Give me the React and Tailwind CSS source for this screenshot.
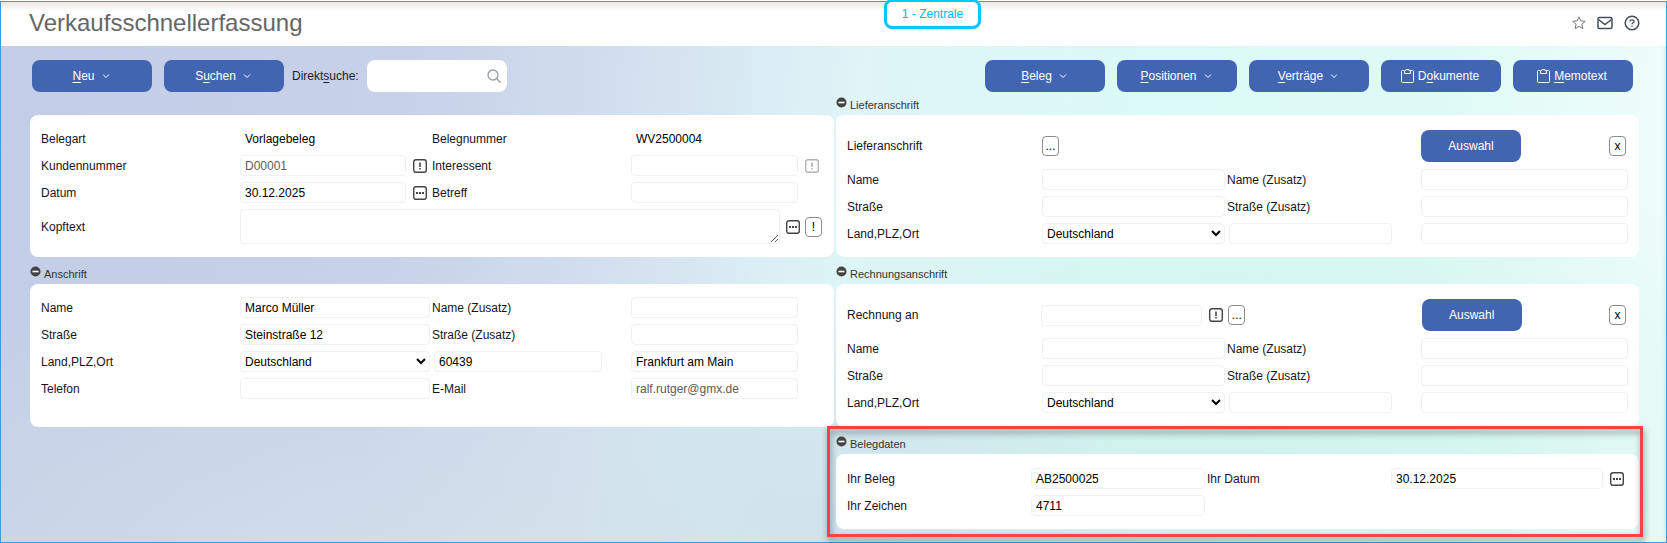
import { useId } from 'react'

const LEFT = 'grid grid-cols-[199fr_192fr_199fr_192fr]'
const RIGHT = 'grid grid-cols-[195fr_185fr_194fr_207fr]'
const DATA = 'grid grid-cols-[184fr_176fr_184fr_237fr]'

const box = 'h-[21px] min-w-0 rounded-sm border bg-white text-xs outline-none'

function Chevron() {
  return (
    <svg width="8" height="6" viewBox="0 0 8 6" fill="none" stroke="#fff" strokeWidth="1">
      <path d="M1 1.500l3 3L7 1.500" />
    </svg>
  )
}

function Clipboard() {
  return (
    <svg width="13" height="14" viewBox="0 0 13 14" fill="none" stroke="#fff" strokeWidth="1">
      <path d="M3 1.500H1.500Q.5 1.500.5 2.500V12.500Q.5 13.500 1.500 13.500H11.500Q12.500 13.500 12.500 12.500V2.500Q12.500 1.500 11.500 1.500H10" />
      <path d="M3.500 4.500V1.500H5V.5H8V1.500H9.500V4.500Z" />
    </svg>
  )
}

function ToolButton({ before = '', hot, after, doc }) {
  return (
    <button className="flex h-8 w-[120px] items-center justify-center rounded-lg bg-[#4265b1] pr-[2px] text-xs text-white">
      {doc && <span className="mr-1"><Clipboard /></span>}
      <span>{before}<u className="underline-offset-2">{hot}</u>{after}</span>
      {!doc && <span className="ml-[7px]"><Chevron /></span>}
    </button>
  )
}

function IconButton({ type, label, faded }) {
  return (
    <button aria-label={label} disabled={faded} className={`shrink-0 ${faded ? 'opacity-40' : ''}`}>
      <svg width="14" height="14" viewBox="0 0 14 14" fill="none" stroke="#444" strokeWidth="1.4">
        <rect x=".7" y=".7" width="12.6" height="12.6" rx="2.2" />
        {type === 'dots' ? (
          <path d="M3 7h2M6 7h2M9 7h2" strokeWidth="1.8" />
        ) : (
          <path d="M7 3.500v4.500M7 9v1.500" strokeWidth="1.6" />
        )}
      </svg>
    </button>
  )
}

function MiniButton({ children, label }) {
  return (
    <button
      aria-label={label}
      className="flex h-5 w-[17px] shrink-0 items-center justify-center rounded border border-[#8c8c8c] bg-white text-xs text-black"
    >
      {children}
    </button>
  )
}

function Label({ id, children }) {
  return <label htmlFor={id} className="self-center text-xs text-[#15151f]">{children}</label>
}

// label cell + field cell, children are the buttons behind the input
function Field({ label, value = '', gray, plain, pad = 'pr-[2px]', children }) {
  const id = useId()
  return (
    <>
      <Label id={id}>{label}</Label>
      <div className={`flex items-center gap-[7px] ${pad}`}>
        <input
          id={id}
          defaultValue={value}
          readOnly={plain}
          className={`${box} flex-1 pt-px pl-1 ${gray ? 'text-[#5c5c5c]' : 'text-black'} ${plain ? 'border-transparent' : 'border-[#f1f1f1]'}`}
        />
        {children}
      </div>
    </>
  )
}

function CityRow({ grid, zip = '', city = '', cityPad }) {
  const id = useId()
  return (
    <div className={`${grid} h-[27px]`}>
      <Label id={id}>Land,PLZ,Ort</Label>
      <div className="flex items-center pr-[2px]">
        <select id={id} className={`${box} w-full border-[#f1f1f1] text-black`} defaultValue="Deutschland">
          <option>Deutschland</option>
          <option>Österreich</option>
          <option>Schweiz</option>
        </select>
      </div>
      <div className="flex items-center pr-[29px] pl-[2px]">
        <input aria-label="PLZ" defaultValue={zip} className={`${box} w-full border-[#f1f1f1] pt-px pl-1 text-black`} />
      </div>
      <div className={`flex items-center ${cityPad}`}>
        <input aria-label="Ort" defaultValue={city} className={`${box} w-full border-[#f1f1f1] pt-px pl-1 text-black`} />
      </div>
    </div>
  )
}

function Section({ title, first, pad = 'pt-[11px]', children }) {
  return (
    <section className="flex flex-col">
      <div className={first ? 'h-[23px]' : 'h-[27px]'}>
        {title && (
          <button className={`flex items-start gap-[3px] text-[11px] leading-4 text-[#333] ${first ? 'pt-[5px]' : 'pt-[9px]'}`}>
            <svg width="11" height="11" viewBox="0 0 11 11">
              <circle cx="5.500" cy="5.500" r="5" fill="#444" />
              <rect x="2.500" y="4.700" width="6" height="1.600" fill="#fff" />
            </svg>
            {title}
          </button>
        )}
      </div>
      <div className={`flex-1 rounded-lg bg-white px-[11px] pb-[10px] ${pad}`}>{children}</div>
    </section>
  )
}

function AddressRows({ grid, name, street, pad }) {
  return (
    <>
      <div className={`${grid} h-[27px]`}>
        <Field label="Name" value={name} />
        <Field label="Name (Zusatz)" pad={pad} />
      </div>
      <div className={`${grid} h-[27px]`}>
        <Field label="Straße" value={street} />
        <Field label="Straße (Zusatz)" pad={pad} />
      </div>
    </>
  )
}

function SelectCell() {
  return (
    <div className="flex items-center justify-between pr-[2px]">
      <button className="h-8 w-[100px] rounded-lg bg-[#4265b1] text-xs text-white">Auswahl</button>
      <MiniButton label="Entfernen">x</MiniButton>
    </div>
  )
}

export default function App() {
  const noteId = useId()
  const billId = useId()

  return (
    <div className="flex min-h-screen flex-col bg-white pt-px font-['Liberation_Sans',Arial,sans-serif] text-xs">
      <div className="relative flex flex-1 flex-col border border-[#3a9be0]">
        {/* Header */}
        <header className="flex h-11 items-center justify-between bg-white pr-[26px] pb-[2px] pl-7 shadow-[inset_0_8px_6px_-4px_#e4e4ea]">
          <h1 className="text-2xl text-[#666]">Verkaufsschnellerfassung</h1>
          <div className="flex items-center gap-[11px] text-[#444c5c]">
            <button aria-label="Favorit">
              <svg width="14" height="14" viewBox="0 0 14 14" fill="none" stroke="#777" strokeWidth="1">
                <path d="M7 .9l1.800 4 4.400.400-3.300 2.900 1 4.400L7 10.300l-3.900 2.300 1-4.400L.8 5.300l4.400-.400z" strokeLinejoin="round" />
              </svg>
            </button>
            <button aria-label="Nachrichten">
              <svg width="16" height="14" viewBox="0 0 16 14" fill="none" stroke="currentColor" strokeWidth="1.500">
                <rect x="1" y="1.500" width="14" height="11" rx="1.500" />
                <path d="M1.500 3.500L8 8.500l6.500-5" />
              </svg>
            </button>
            <button aria-label="Hilfe">
              <svg width="16" height="16" viewBox="0 0 16 16" fill="none" stroke="currentColor" strokeWidth="1.500">
                <circle cx="8" cy="8" r="6.800" />
                <path d="M6 6.500Q6 4.800 8 4.800T10 6.500Q10 7.400 8.900 7.900Q8 8.300 8 9.300M8 10.400v1.400" strokeWidth="1.300" />
              </svg>
            </button>
          </div>
        </header>
        <div className="absolute -top-[3px] left-[883px] flex h-[30px] w-[97px] items-center justify-center rounded-lg border-[3px] border-[#00c8ff] bg-white text-[#00b8f0]">
          1 - Zentrale
        </div>

        <main className="flex-1 bg-[radial-gradient(ellipse_900px_330px_at_30%_110%,#d2e1ebee,#d2e1eb00),radial-gradient(ellipse_300px_220px_at_50%_100%,#cbe2ebee,#cbe2eb00),radial-gradient(ellipse_700px_330px_at_75%_85%,#cff3ec,#cff3ec00),linear-gradient(97deg,#c4cde7_0%,#c7d1e9_24%,#d3e0ef_37%,#dff5f7_50%,#dbf9f7_66%,#defaf6_84%,#f3fefc_100%)] pr-[27px] pl-[29px] shadow-[inset_-4px_0_4px_-3px_#d5e5e5]">
          {/* Toolbar */}
          <div className="flex items-center justify-between pt-[14px] pr-[6px] pl-[2px]">
            <div className="flex items-center">
              <div className="flex gap-3">
                <ToolButton hot="N" after="eu" />
                <ToolButton before="S" hot="u" after="chen" />
              </div>
              <label htmlFor="direct" className="mr-2 ml-2 text-[#222]">
                Direkt<u className="underline-offset-2">s</u>uche:
              </label>
              <div className="flex h-8 w-[140px] items-center rounded-lg bg-white pr-[6px]">
                <input id="direct" className="min-w-0 flex-1 bg-transparent pl-2 outline-none" />
                <svg width="14" height="14" viewBox="0 0 14 14" fill="none" stroke="#98a0ac" strokeWidth="1.400">
                  <circle cx="6" cy="6" r="5" />
                  <path d="M9.600 9.600l4 4" />
                </svg>
              </div>
            </div>
            <div className="flex gap-3">
              <ToolButton hot="B" after="eleg" />
              <ToolButton hot="P" after="ositionen" />
              <ToolButton hot="V" after="erträge" />
              <ToolButton before="D" hot="o" after="kumente" doc />
              <ToolButton hot="M" after="emotext" doc />
            </div>
          </div>

          <div className="grid grid-cols-[804fr_803fr] gap-x-[2px]">
            <Section first pad="pt-[10px]">
              <div className={`${LEFT} h-[27px]`}>
                <Field label="Belegart" value="Vorlagebeleg" plain />
                <Field label="Belegnummer" value="WV2500004" plain />
              </div>
              <div className={`${LEFT} h-[27px]`}>
                <Field label="Kundennummer" value="D00001" gray pad="pr-[5px]">
                  <IconButton label="Kunde öffnen" />
                </Field>
                <Field label="Interessent" pad="pr-[4px]">
                  <IconButton label="Interessent öffnen" faded />
                </Field>
              </div>
              <div className={`${LEFT} h-[27px]`}>
                <Field label="Datum" value="30.12.2025" pad="pr-[5px]">
                  <IconButton type="dots" label="Datum wählen" />
                </Field>
                <Field label="Betreff" pad="pr-[25px]" />
              </div>
              <div className="grid h-[41px] grid-cols-[199fr_583fr]">
                <Label id={noteId}>Kopftext</Label>
                <div className="flex items-center pr-px">
                  <textarea id={noteId} className={`${box} h-[35px] flex-1 resize border-[#f1f1f1] text-black`} />
                  <span className="mr-[5px] ml-[6px] flex"><IconButton type="dots" label="Kopftext bearbeiten" /></span>
                  <MiniButton label="Kopftext öffnen">!</MiniButton>
                </div>
              </div>
            </Section>

            <Section title="Lieferanschrift" first>
              <div className={`${RIGHT} h-10`}>
                <span className="self-center text-[#15151f]">Lieferanschrift</span>
                <div className="flex items-center"><MiniButton label="Lieferanschrift wählen">...</MiniButton></div>
                <span />
                <SelectCell />
              </div>
              <AddressRows grid={RIGHT} pad="" />
              <CityRow grid={RIGHT} cityPad="" />
            </Section>

            <Section title="Anschrift" pad="pt-[10px]">
              <AddressRows grid={LEFT} name="Marco Müller" street="Steinstraße 12" pad="pr-[25px]" />
              <CityRow grid={LEFT} zip="60439" city="Frankfurt am Main" cityPad="pr-[25px]" />
              <div className={`${LEFT} h-[27px]`}>
                <Field label="Telefon" />
                <Field label="E-Mail" value="ralf.rutger@gmx.de" gray pad="pr-[25px]" />
              </div>
            </Section>

            <Section title="Rechnungsanschrift">
              <div className={`${RIGHT} h-10`}>
                <Label id={billId}>Rechnung an</Label>
                <div className="flex items-center gap-[7px] pr-[5px]">
                  <input id={billId} className={`${box} flex-1 border-[#f1f1f1] pl-1 text-black`} />
                  <IconButton label="Rechnungsempfänger öffnen" />
                </div>
                <div className="flex items-center"><MiniButton label="Rechnungsanschrift wählen">...</MiniButton></div>
                <SelectCell />
              </div>
              <AddressRows grid={RIGHT} pad="" />
              <CityRow grid={RIGHT} cityPad="" />
              <div className="h-px" />
            </Section>

            <div className="relative col-start-2">
              <Section title="Belegdaten">
                <div className={`${DATA} h-[27px]`}>
                  <Field label="Ihr Beleg" value="AB2500025" />
                  <Field label="Ihr Datum" value="30.12.2025" pad="pr-[4px]">
                    <IconButton type="dots" label="Datum wählen" />
                  </Field>
                </div>
                <div className={`${DATA} h-[27px]`}>
                  <Field label="Ihr Zeichen" value="4711" />
                </div>
              </Section>
              <div className="pointer-events-none absolute -top-px -right-1 -bottom-2 -left-[9px] border-[3px] border-[#fb4144] drop-shadow-[1px_4px_3px_rgba(0,0,0,0.45)]" />
            </div>
          </div>
        </main>
      </div>
    </div>
  )
}
